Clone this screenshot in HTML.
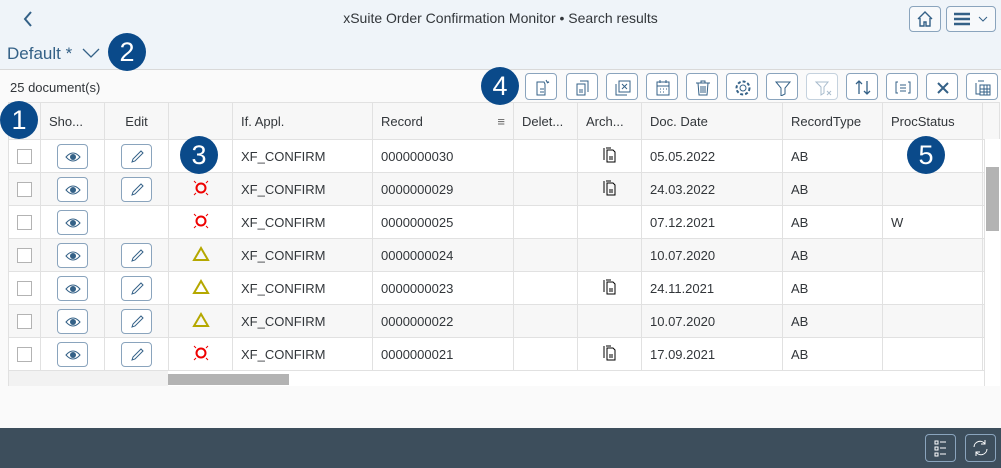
<!DOCTYPE html><html><head><style>
*{box-sizing:border-box;margin:0;padding:0}
body{width:1001px;height:468px;overflow:hidden;background:#fafafa;font-family:"Liberation Sans",sans-serif;position:relative;color:#32363a}
.hdr{position:absolute;left:0;top:0;width:1001px;height:70px;background:#eff4f9;border-bottom:1px solid #d9d9d9}
.title{position:absolute;top:10px;left:0;width:1001px;text-align:center;font-size:14px;color:#32363a}
.hb{position:absolute;top:6px;height:26px;border:1px solid #8aa4bd;border-radius:4px;background:#f7f9fb}
.tb{position:absolute;top:73px;width:32px;height:27px;border:1px solid #8aa4bd;border-radius:4px;background:#fff}
.tb svg{position:absolute;left:7px;top:5px}
.badge{position:absolute;width:38px;height:38px;border-radius:50%;background:#0a4a8a;color:#fff;font-size:27px;text-align:center;line-height:38px;z-index:5}
table{position:absolute;left:8px;top:102px;border-collapse:collapse;table-layout:fixed;font-size:13px}
td,th{border:1px solid #e1e1e1;height:33px;padding:0 8px;font-weight:normal;text-align:left;white-space:nowrap;overflow:hidden}
th{height:37px;background:#f7f7f7;color:#32363a}
tr:nth-child(odd) td{background:#f7f7f7}
tr:nth-child(even) td{background:#fff}
.c{text-align:center;padding:0}
.cb{display:inline-block;width:15px;height:15px;border:1px solid #b3b3b3;background:#fff;vertical-align:middle}
.ib{display:inline-block;width:31px;height:25px;border:1px solid #8aa4bd;border-radius:4px;background:#fff;vertical-align:middle;position:relative}
.ib svg{position:absolute;left:7px;top:4px}
.foot{position:absolute;left:0;top:428px;width:1001px;height:40px;background:#3d4e5c}
.fb{position:absolute;top:6px;width:31px;height:28px;border:1px solid #8aa4bd;border-radius:4px}
</style></head><body>
<div class="hdr">
<svg style="position:absolute;left:22px;top:10px" width="12" height="18"><path d="M9 2L3 9l6 7" stroke="#346187" stroke-width="2" fill="none"/></svg>
<div class="title">xSuite Order Confirmation Monitor • Search results</div>
<div class="hb" style="left:909px;width:32px"><svg width="30" height="24"><path d="M8 12L15 5l7 7M10 11v8h4v-4h2v4h4v-8" stroke="#346187" stroke-width="1.4" fill="none"/></svg></div>
<div class="hb" style="left:946px;width:50px"><svg width="48" height="24"><path d="M7 7h16M7 12h16M7 17h16" stroke="#346187" stroke-width="2.4"/><path d="M32 10l4 4 4-4" stroke="#346187" fill="none"/></svg></div>
<div style="position:absolute;left:7px;top:44px;font-size:17px;color:#346187">Default * <svg width="20" height="14" style="margin-left:4px"><path d="M2 4l8 8 8-8" stroke="#346187" stroke-width="1.3" fill="none"/></svg></div>
</div>
<div style="position:absolute;left:10px;top:80px;font-size:13px">25 document(s)</div>
<div class="tb" style="left:525px"><svg width="18" height="17"><path d="M4 3h7l1 2v11H4z M7 10h4M7 13h4" stroke="#346187" fill="none"/><path d="M13 1l1 2 2 0-2 1" stroke="#346187" fill="none"/></svg></div>
<div class="tb" style="left:566px"><svg width="18" height="17"><path d="M6 2h8v11M3 5h8v11H3z M5 11h4M5 13h4" stroke="#346187" fill="none"/></svg></div>
<div class="tb" style="left:606px"><svg width="18" height="17"><path d="M5 2h11v11H5zM2 5v11h11M8 5l5 5M13 5l-5 5" stroke="#346187" fill="none"/></svg></div>
<div class="tb" style="left:646px"><svg width="18" height="17"><path d="M3 3h12v13H3zM3 7h12M6 1v3M12 1v3M6 10h1M9 10h1M12 10h1M6 13h1M9 13h1" stroke="#346187" fill="none"/></svg></div>
<div class="tb" style="left:686px"><svg width="18" height="17"><path d="M2 4h14M7 4V2h4v2M4 4l1 12h8l1-12M7 7v7M9 7v7M11 7v7" stroke="#346187" fill="none"/></svg></div>
<div class="tb" style="left:726px"><svg width="18" height="17"><circle cx="9" cy="9" r="3" stroke="#346187" fill="none"/><circle cx="9" cy="9" r="6.5" stroke="#346187" stroke-dasharray="3 2" stroke-width="2" fill="none"/></svg></div>
<div class="tb" style="left:766px"><svg width="18" height="17"><path d="M2 3h14l-5 6v6l-4 2V9z" stroke="#346187" fill="none"/></svg></div>
<div class="tb" style="left:806px;border-color:#c5d2de"><svg width="18" height="17"><path d="M2 3h12l-4 5v6l-3 2V8z M13 12l4 4M17 12l-4 4" stroke="#a9bccd" fill="none"/></svg></div>
<div class="tb" style="left:846px"><svg width="18" height="17"><path d="M5 15V2M2 5l3-3 3 3M13 2v13M10 12l3 3 3-3" stroke="#346187" stroke-width="1.3" fill="none"/></svg></div>
<div class="tb" style="left:886px"><svg width="18" height="17"><path d="M4 3H2v11h2M14 3h2v11h-2M6 6h6M6 9h6M6 12h6" stroke="#346187" fill="none"/></svg></div>
<div class="tb" style="left:926px"><svg width="18" height="17"><path d="M4 4l10 10M14 4L4 14" stroke="#346187" stroke-width="2" fill="none"/></svg></div>
<div class="tb" style="left:966px"><svg width="18" height="17"><path d="M4 2h6M2 4v11h4M6 6h10v10H6zM6 10h10M6 13h10M10 6v10M13 6v10" stroke="#346187" fill="none"/></svg></div>

<table>
<colgroup><col style="width:32px"><col style="width:64px"><col style="width:64px"><col style="width:64px"><col style="width:140px"><col style="width:141px"><col style="width:64px"><col style="width:64px"><col style="width:141px"><col style="width:100px"><col style="width:100px"><col style="width:3px"></colgroup>
<tr><th></th><th>Sho...</th><th class="c">Edit</th><th style="border-left:1px solid #999"></th><th>If. Appl.</th><th>Record <span style="float:right;color:#666">&#8801;</span></th><th>Delet...</th><th>Arch...</th><th>Doc. Date</th><th>RecordType</th><th>ProcStatus</th><th></th></tr>
</table>
<table style="top:139px">
<colgroup><col style="width:32px"><col style="width:64px"><col style="width:64px"><col style="width:64px"><col style="width:140px"><col style="width:141px"><col style="width:64px"><col style="width:64px"><col style="width:141px"><col style="width:100px"><col style="width:100px"><col style="width:3px"></colgroup>
<tr style="display:none"><td></td></tr>
<tr><td class="c"><span class="cb"></span></td><td class="c"><span class="ib"><svg width="16" height="16"><path d="M1 8q7-8 14 0q-7 8-14 0z" stroke="#346187" fill="none"/><circle cx="8" cy="8" r="3" fill="#346187"/></svg></span></td><td class="c"><span class="ib"><svg width="16" height="16"><path d="M3 13l1-3 8-8 2 2-8 8z" stroke="#346187" fill="none"/></svg></span></td><td style="border-left:1px solid #999"></td><td>XF_CONFIRM</td><td>0000000030</td><td></td><td class="c"><svg width="14" height="16"><path d="M1 1v12M3 1h5M4 3h6l2 2v10H4z M6 10h4M6 12h4" stroke="#000" fill="none"/></svg></td><td>05.05.2022</td><td>AB</td><td></td><td></td></tr>
<tr><td class="c"><span class="cb"></span></td><td class="c"><span class="ib"><svg width="16" height="16"><path d="M1 8q7-8 14 0q-7 8-14 0z" stroke="#346187" fill="none"/><circle cx="8" cy="8" r="3" fill="#346187"/></svg></span></td><td class="c"><span class="ib"><svg width="16" height="16"><path d="M3 13l1-3 8-8 2 2-8 8z" stroke="#346187" fill="none"/></svg></span></td><td class="c" style="border-left:1px solid #999"><svg width="16" height="16"><circle cx="8" cy="8" r="4.5" stroke="#e00" stroke-width="2" fill="none"/><path d="M1 1l2 2M15 1l-2 2M1 15l2-2M15 15l-2-2" stroke="#e00"/></svg></td><td>XF_CONFIRM</td><td>0000000029</td><td></td><td class="c"><svg width="14" height="16"><path d="M1 1v12M3 1h5M4 3h6l2 2v10H4z M6 10h4M6 12h4" stroke="#000" fill="none"/></svg></td><td>24.03.2022</td><td>AB</td><td></td><td></td></tr>
<tr><td class="c"><span class="cb"></span></td><td class="c"><span class="ib"><svg width="16" height="16"><path d="M1 8q7-8 14 0q-7 8-14 0z" stroke="#346187" fill="none"/><circle cx="8" cy="8" r="3" fill="#346187"/></svg></span></td><td></td><td class="c" style="border-left:1px solid #999"><svg width="16" height="16"><circle cx="8" cy="8" r="4.5" stroke="#e00" stroke-width="2" fill="none"/><path d="M1 1l2 2M15 1l-2 2M1 15l2-2M15 15l-2-2" stroke="#e00"/></svg></td><td>XF_CONFIRM</td><td>0000000025</td><td></td><td></td><td>07.12.2021</td><td>AB</td><td>W</td><td></td></tr>
<tr><td class="c"><span class="cb"></span></td><td class="c"><span class="ib"><svg width="16" height="16"><path d="M1 8q7-8 14 0q-7 8-14 0z" stroke="#346187" fill="none"/><circle cx="8" cy="8" r="3" fill="#346187"/></svg></span></td><td class="c"><span class="ib"><svg width="16" height="16"><path d="M3 13l1-3 8-8 2 2-8 8z" stroke="#346187" fill="none"/></svg></span></td><td class="c" style="border-left:1px solid #999"><svg width="18" height="16"><path d="M9 2L16 14H2z" stroke="#b5a800" stroke-width="2" fill="none"/></svg></td><td>XF_CONFIRM</td><td>0000000024</td><td></td><td></td><td>10.07.2020</td><td>AB</td><td></td><td></td></tr>
<tr><td class="c"><span class="cb"></span></td><td class="c"><span class="ib"><svg width="16" height="16"><path d="M1 8q7-8 14 0q-7 8-14 0z" stroke="#346187" fill="none"/><circle cx="8" cy="8" r="3" fill="#346187"/></svg></span></td><td class="c"><span class="ib"><svg width="16" height="16"><path d="M3 13l1-3 8-8 2 2-8 8z" stroke="#346187" fill="none"/></svg></span></td><td class="c" style="border-left:1px solid #999"><svg width="18" height="16"><path d="M9 2L16 14H2z" stroke="#b5a800" stroke-width="2" fill="none"/></svg></td><td>XF_CONFIRM</td><td>0000000023</td><td></td><td class="c"><svg width="14" height="16"><path d="M1 1v12M3 1h5M4 3h6l2 2v10H4z M6 10h4M6 12h4" stroke="#000" fill="none"/></svg></td><td>24.11.2021</td><td>AB</td><td></td><td></td></tr>
<tr><td class="c"><span class="cb"></span></td><td class="c"><span class="ib"><svg width="16" height="16"><path d="M1 8q7-8 14 0q-7 8-14 0z" stroke="#346187" fill="none"/><circle cx="8" cy="8" r="3" fill="#346187"/></svg></span></td><td class="c"><span class="ib"><svg width="16" height="16"><path d="M3 13l1-3 8-8 2 2-8 8z" stroke="#346187" fill="none"/></svg></span></td><td class="c" style="border-left:1px solid #999"><svg width="18" height="16"><path d="M9 2L16 14H2z" stroke="#b5a800" stroke-width="2" fill="none"/></svg></td><td>XF_CONFIRM</td><td>0000000022</td><td></td><td></td><td>10.07.2020</td><td>AB</td><td></td><td></td></tr>
<tr><td class="c"><span class="cb"></span></td><td class="c"><span class="ib"><svg width="16" height="16"><path d="M1 8q7-8 14 0q-7 8-14 0z" stroke="#346187" fill="none"/><circle cx="8" cy="8" r="3" fill="#346187"/></svg></span></td><td class="c"><span class="ib"><svg width="16" height="16"><path d="M3 13l1-3 8-8 2 2-8 8z" stroke="#346187" fill="none"/></svg></span></td><td class="c" style="border-left:1px solid #999"><svg width="16" height="16"><circle cx="8" cy="8" r="4.5" stroke="#e00" stroke-width="2" fill="none"/><path d="M1 1l2 2M15 1l-2 2M1 15l2-2M15 15l-2-2" stroke="#e00"/></svg></td><td>XF_CONFIRM</td><td>0000000021</td><td></td><td class="c"><svg width="14" height="16"><path d="M1 1v12M3 1h5M4 3h6l2 2v10H4z M6 10h4M6 12h4" stroke="#000" fill="none"/></svg></td><td>17.09.2021</td><td>AB</td><td></td><td></td></tr>
</table>
<div style="position:absolute;left:168px;top:371px;width:816px;height:15px;background:#fff"></div>
<div style="position:absolute;left:8px;top:371px;width:160px;height:15px;background:#f2f2f2;border-left:1px solid #e1e1e1"></div>
<div style="position:absolute;left:168px;top:374px;width:121px;height:11px;background:#b3b3b3"></div>
<div style="position:absolute;left:984px;top:139px;width:16px;height:247px;background:#fff;border-left:1px solid #e1e1e1"></div>
<div style="position:absolute;left:986px;top:167px;width:13px;height:64px;background:#b3b3b3"></div>
<div class="badge" style="left:0;top:101px">1</div>
<div class="badge" style="left:108px;top:33px">2</div>
<div class="badge" style="left:180px;top:136px">3</div>
<div class="badge" style="left:481px;top:67px">4</div>
<div class="badge" style="left:907px;top:136px">5</div>
<div class="foot">
<div class="fb" style="left:925px"><svg width="29" height="26"><path d="M9 6h3v3H9zM9 12h3v3H9zM9 18h3v3H9zM14 7h6M14 13h6M14 19h6" stroke="#fff" fill="none"/></svg></div>
<div class="fb" style="left:965px"><svg width="29" height="26"><path d="M8 12a6 6 0 0 1 11-3M21 14a6 6 0 0 1-11 3M19 5v4h-4M10 21v-4h4" stroke="#fff" fill="none"/></svg></div>
</div>
</body></html>
